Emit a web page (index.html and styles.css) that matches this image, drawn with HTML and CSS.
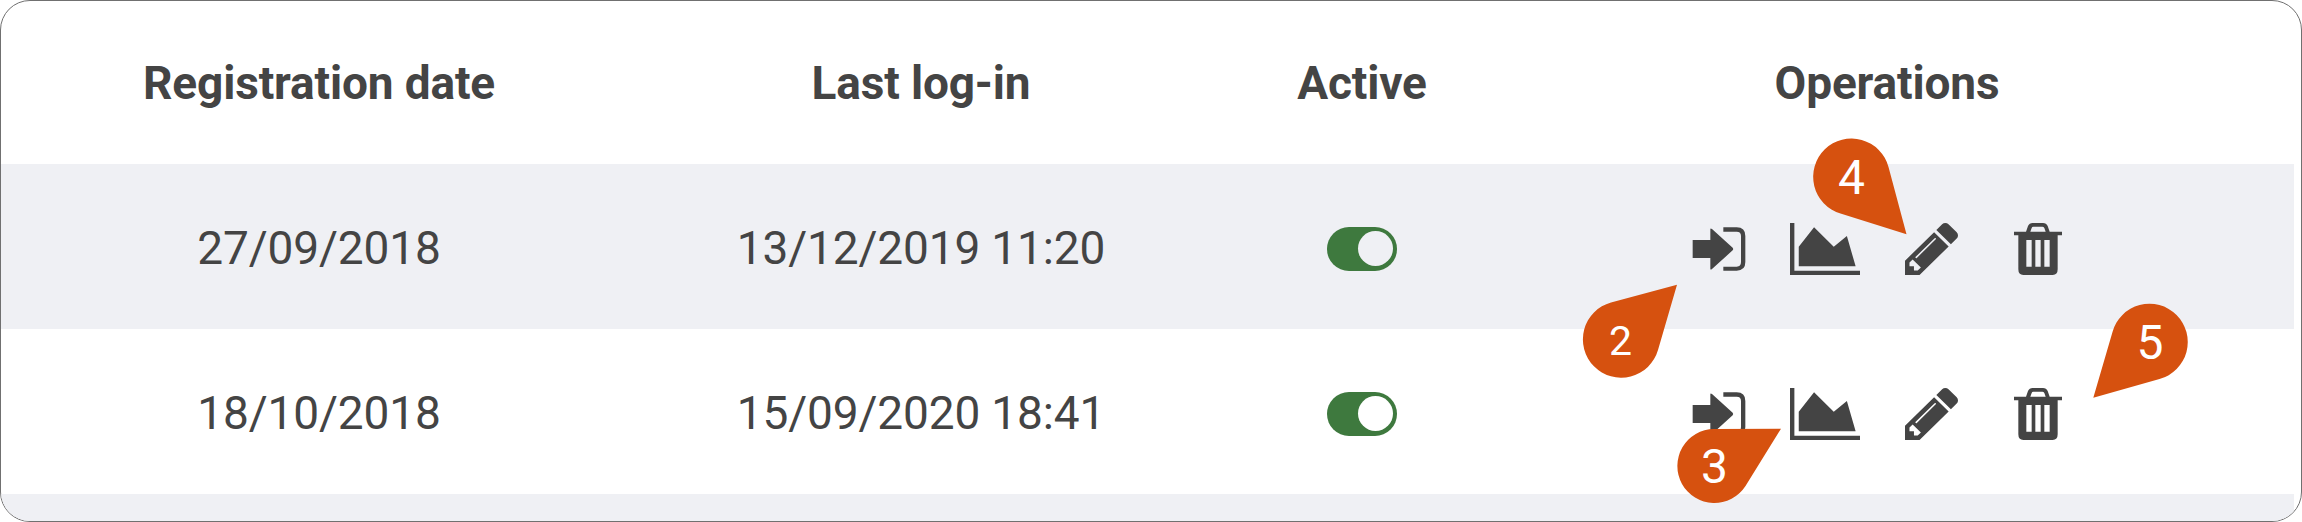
FILE: index.html
```html
<!DOCTYPE html>
<html lang="en">
<head>
    <meta charset="UTF-8">
    <meta name="viewport" content="width=device-width, initial-scale=1.0">
    <title>Users</title>
    <link rel="stylesheet" href="styles.css">
</head>
<body>
    <!-- Icon set -->
    <svg class="sprite">
        <symbol id="icon-login" viewBox="97 68 162 156">
            <path d="M99 119H152V87Q152 82 157 86L219 142Q222 146 219 150L157 206Q152 210 152 205V173H99Z"/>
            <path d="M191 81H231Q257 81 257 107V185Q257 211 231 211H191V199H231Q244 199 244 185V107Q244 94 231 94H191Z"/>
        </symbol>
        <symbol id="icon-chart" viewBox="0 0 2048 1536" preserveAspectRatio="none">
            <path d="M2048 1408v128H0V0h128v1408h1920zM1664 384l256 896H256V704l448-576 576 576z"/>
        </symbol>
        <symbol id="icon-pencil" viewBox="128 149 1515 1515" preserveAspectRatio="none">
            <path d="M491 1536l91-91-235-235-91 91v107h128v128h107zm523-928q0-22-22-22-10 0-17 7l-542 542q-7 7-7 17 0 22 22 22 10 0 17-7l542-542q7-7 7-17zm-54-192l416 416-832 832h-416v-416zm683 96q0 53-37 90l-166 166-416-416 166-165q36-38 90-38 53 0 91 38l235 234q37 39 37 91z"/>
        </symbol>
        <symbol id="icon-trash" viewBox="462 68 144 156">
            <path fill-rule="evenodd" d="M462 94H498L504 77Q508 68 518 68H549Q559 68 563 77L569 94H606V105H593V207Q593 224 578 224H490Q475 224 475 207V105H462ZM511 94H557L553 83Q551 79 547 79H520Q516 79 515 83ZM499 119V199H515V119ZM526 119V199H542V119ZM553 119V199H569V119Z"/>
        </symbol>
    </svg>

    <div class="container">
        <table class="users">
            <thead>
                <tr>
                    <th class="col-date">Registration date</th>
                    <th class="col-login">Last log-in</th>
                    <th class="col-active">Active</th>
                    <th class="col-ops">Operations</th>
                    <th></th>
                </tr>
            </thead>
            <tbody>
                <tr>
                    <td>27/09/2018</td>
                    <td>13/12/2019 11:20</td>
                    <td><div class="toggle"><span class="knob"></span></div></td>
                    <td>
                        <div class="operations">
                            <svg class="icon login"><use href="#icon-login"/></svg>
                            <svg class="icon chart"><use href="#icon-chart"/></svg>
                            <svg class="icon pencil"><use href="#icon-pencil"/></svg>
                            <svg class="icon trash"><use href="#icon-trash"/></svg>
                        </div>
                    </td>
                    <td></td>
                </tr>
                <tr>
                    <td>18/10/2018</td>
                    <td>15/09/2020 18:41</td>
                    <td><div class="toggle"><span class="knob"></span></div></td>
                    <td>
                        <div class="operations">
                            <svg class="icon login"><use href="#icon-login"/></svg>
                            <svg class="icon chart"><use href="#icon-chart"/></svg>
                            <svg class="icon pencil"><use href="#icon-pencil"/></svg>
                            <svg class="icon trash"><use href="#icon-trash"/></svg>
                        </div>
                    </td>
                    <td></td>
                </tr>
                <tr>
                    <td></td>
                    <td></td>
                    <td></td>
                    <td></td>
                    <td></td>
                </tr>
            </tbody>
        </table>
    </div>

    <!-- Numbered markers pointing at the operations -->
    <svg class="markers" viewBox="0 0 2302 522">
        <path d="M1611 302.5L1677 284.7L1658 350A38.3 38.3 0 1 1 1611 302.5Z"/>
        <text class="small" x="1620.5" y="355">2</text>
        <path d="M1714 429L1781 428.7L1745.5 486A37 37 0 1 1 1714 429Z"/>
        <text x="1714.5" y="483.3">3</text>
        <path d="M1888.5 167L1906.5 234.2L1840.5 213.5A38.3 38.3 0 1 1 1888.5 167Z"/>
        <text x="1851.5" y="193.8">4</text>
        <path d="M2112.5 332L2093.3 397.7L2159.5 379A38.3 38.3 0 1 0 2112.5 332Z"/>
        <text x="2150" y="358.5">5</text>
    </svg>
</body>
</html>
```
FILE: styles.css
```css
* {
    box-sizing: border-box;
}
body {
    margin: 0;
    background-color: white;
    font-family: Roboto, "Liberation Sans", sans-serif;
    font-size: 46px;
    letter-spacing: -0.15px;
    color: #444;
}
.sprite {
    display: none;
}
.container {
    height: 522px;
    padding-right: 7px;
    border: 1px solid #707070;
    border-radius: 30px;
    overflow: hidden;
}
.users {
    width: 100%;
    table-layout: fixed;
    border-collapse: collapse;
}
th, td {
    height: 165px;
    padding: 0;
    text-align: center;
    vertical-align: middle;
    white-space: nowrap;
}
th {
    height: 163px;
    font-weight: 700;
}
td {
    padding-top: 2px;
}
tbody tr:nth-child(odd) {
    background-color: #eff0f4;
}
.col-date {
    width: 636px;
}
.col-login {
    width: 568px;
}
.col-active {
    width: 314px;
}
.col-ops {
    width: 736px;
}
.toggle {
    display: flex;
    justify-content: flex-end;
    align-items: center;
    width: 70px;
    height: 44px;
    margin: 2px auto 0;
    padding-right: 4px;
    border-radius: 22px;
    background-color: #3e793e;
}
.knob {
    width: 35px;
    height: 35px;
    border-radius: 50%;
    background-color: white;
}
tr:nth-child(odd) .knob {
    background-color: #eff0f4;
}
.operations {
    display: flex;
    justify-content: center;
    padding: 3px 20px 0 0;
}
.icon {
    height: 52px;
    fill: #444;
}
.login {
    width: 54px;
    margin-right: 44px;
}
.chart {
    width: 70px;
    margin-right: 45px;
}
.pencil {
    width: 53px;
    margin-right: 56px;
}
.trash {
    width: 48px;
}
.markers {
    position: absolute;
    top: 0;
    left: 0;
    width: 2302px;
    height: 522px;
    fill: #d6510f;
}
.markers text {
    font-size: 48px;
    text-anchor: middle;
    fill: white;
}
.markers .small {
    font-size: 41px;
}
```
